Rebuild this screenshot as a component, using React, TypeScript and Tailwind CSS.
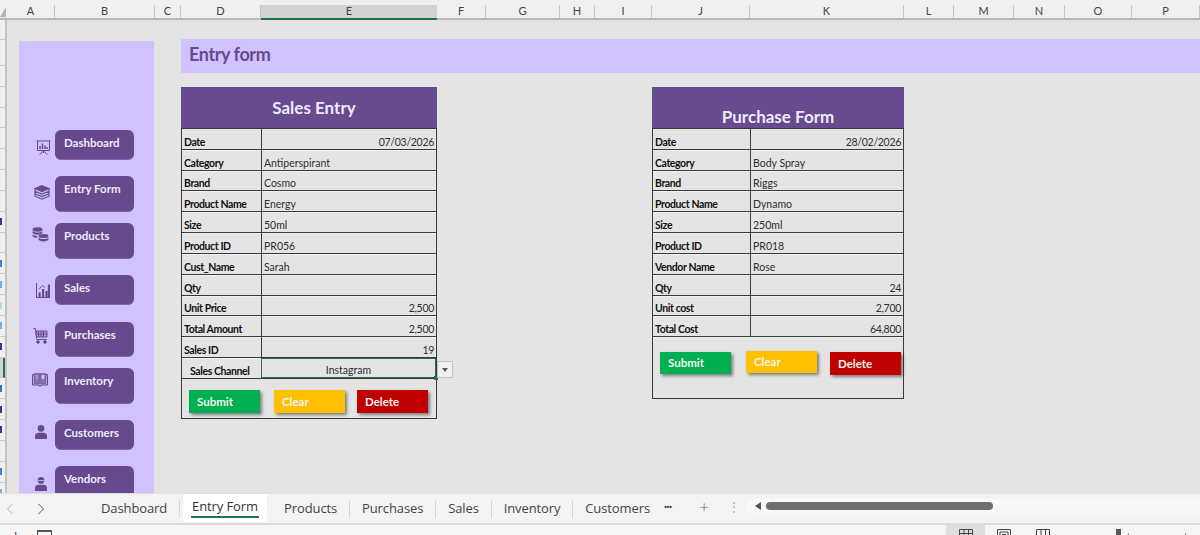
import type { ReactNode } from "react";

const columns = [
  { label: "A", width: "w-[48px]" },
  { label: "B", width: "w-[100px]" },
  { label: "C", width: "w-[26px]" },
  { label: "D", width: "w-[80px]" },
  { label: "E", width: "w-[176px]", active: true },
  { label: "F", width: "w-[49px]" },
  { label: "G", width: "w-[74px]" },
  { label: "H", width: "w-[35px]" },
  { label: "I", width: "w-[57px]" },
  { label: "J", width: "w-[98px]" },
  { label: "K", width: "w-[154px]" },
  { label: "L", width: "w-[50px]" },
  { label: "M", width: "w-[60px]" },
  { label: "N", width: "w-[51px]" },
  { label: "O", width: "w-[67px]" },
  { label: "P", width: "w-[68px]" },
];

// the row numbers are almost fully scrolled off, only a sliver of each shows
const rowMarks: Record<number, string> = {
  10: "bg-[#2a3f8f]",
  12: "bg-[#3b82d6]",
  13: "bg-[#6fb0ea]",
  14: "bg-[#b5dbe8]",
  15: "bg-[#6fb0ea]",
  16: "bg-[#2a3f8f]",
  18: "bg-[#3b6fc2]",
  19: "bg-[#2a3f8f]",
  20: "bg-[#2a3f8f]",
  22: "bg-[#3b82d6]",
  23: "bg-[#6fb0ea]",
};

const rowNumbers = Array.from({ length: 23 }, (_, i) => i + 1);

function DashboardIcon() {
  return (
    <svg viewBox="0 0 15 15" className="w-[15px] h-[15px]" fill="none" stroke="#674a8e">
      <path d="M0.5 1h14M1.5 1v9.5h12V1" />
      <path d="M4 9V6M6.5 9V3.5M9 9V5.5M11 9V7" strokeWidth="1.4" />
      <path d="M7.5 10.5v2.5M7.5 11l-4 3.5M7.5 11l4 3.5" />
    </svg>
  );
}

function LayersIcon() {
  return (
    <svg viewBox="0 0 16 15" className="w-[16px] h-[15px]" fill="none" stroke="#674a8e" strokeWidth="1.2">
      <path d="M8 0.7L15 3.6 8 6.5 1 3.6z" fill="#674a8e" />
      <path d="M1 6.2L8 9.1l7-2.9M1 8.7l7 2.9 7-2.9M1 3.6v7.6L8 14.2l7-3V3.6" />
    </svg>
  );
}

function CoinsIcon() {
  return (
    <svg viewBox="0 0 17 15" className="w-[17px] h-[15px]" fill="#674a8e">
      <ellipse cx="5.5" cy="2.5" rx="5" ry="2.2" />
      <path d="M0.5 4v1.5c0 1.2 2.2 2.2 5 2.2s5-1 5-2.2V4c-1 1-3 1.5-5 1.5S1.5 5 .5 4z" />
      <path d="M0.5 7.2v1.5c0 1.2 2.2 2.1 4.5 2.1V8.9c-2 0-3.7-.6-4.5-1.7z" />
      <ellipse cx="11.5" cy="9" rx="5" ry="2" />
      <path d="M6.5 10.5v1.7c0 1.2 2.2 2.2 5 2.2s5-1 5-2.2v-1.7c-1 1-3 1.5-5 1.5s-4-.5-5-1.500z" />
    </svg>
  );
}

function BarsIcon() {
  return (
    <svg viewBox="0 0 14 15" className="w-[14px] h-[15px]" fill="#674a8e">
      <path d="M0 0h1v14h13v1H0z" />
      <path d="M2.5 9.5h2.2V14H2.5zM6 6h2.2v8H6zM9.5 8h2v6h-2zM11.800 1.5H14V14h-2.200z" />
      <path d="M2.8 6.5L6.5 2.500l2.500 2" fill="none" stroke="#674a8e" />
    </svg>
  );
}

function CartIcon() {
  return (
    <svg viewBox="0 0 15 16" className="w-[15px] h-[16px]" fill="none" stroke="#674a8e">
      <path d="M0.3 0.5h2l1.5 11h10" />
      <path d="M3 3h11v6H3.5z" fill="#674a8e" fillOpacity="0.35" />
      <path d="M5.5 3v6M8 3v6M10.500 3v6M3 6h11" />
      <circle cx="5" cy="14" r="1.3" fill="#674a8e" />
      <circle cx="12" cy="14" r="1.3" fill="#674a8e" />
    </svg>
  );
}

function BookIcon() {
  return (
    <svg viewBox="0 0 16 14" className="w-[16px] h-[14px]">
      <path d="M0.5 1.5h15V12H9l-1 1.500-1-1.500H0.500z" fill="#b4a0d8" stroke="#674a8e" />
      <path d="M2.5 .5h5v10h-5zM8.500 .5h5v10h-5z" fill="#8a72b3" stroke="#674a8e" strokeWidth="0.6" />
      <path d="M4 3h2M4 5h2M10 2.500h2v3h-2z" stroke="#d1c2ff" strokeWidth="0.8" fill="#d1c2ff" />
    </svg>
  );
}

function PersonIcon({ headset }: { headset?: boolean }) {
  return (
    <svg viewBox="0 0 12 14" className="w-[12px] h-[14px]" fill="#674a8e">
      <circle cx="6" cy="3.4" r="3.3" />
      {headset && <path d="M3 3.600h6" stroke="#d1c2ff" strokeWidth="0.8" />}
      <path d="M0 14v-3c0-2 1.800-3.200 3.500-3.200h5c1.700 0 3.500 1.200 3.500 3.200v3z" />
    </svg>
  );
}

function SideItem({
  label,
  icon,
  rowClass,
  iconClass,
}: {
  label: string;
  icon: ReactNode;
  rowClass: string;
  iconClass: string;
}) {
  return (
    <div className={`flex shrink-0 ${rowClass}`}>
      <div className="w-[36px] shrink-0">
        <div className={iconClass}>{icon}</div>
      </div>
      <div className="w-[79px] h-full rounded-[6px] bg-[#674a8e] pl-[9px] pt-[5px] text-[11.5px] leading-[16px] font-bold text-[#efe9fb] border-b border-[#7d64a3]">
        {label}
      </div>
    </div>
  );
}

function Cell({
  label,
  value,
  right,
}: {
  label: string;
  value?: string;
  right?: boolean;
}) {
  return (
    <div className="flex h-[20.83px] border-b border-[#3a3a3a] shadow-[0_1px_0_rgba(255,255,255,0.5)]">
      <div className="w-[79px] shrink-0 flex items-end pl-[2px] text-[10.5px] tracking-[-0.4px] leading-[14px] font-bold text-[#111]">
        {label}
      </div>
      <div
        className={`flex-1 flex items-end border-l border-[#3a3a3a] px-[2px] text-[10.5px] leading-[14px] text-[#2e2e2e] ${
          right ? "justify-end tracking-[-0.3px]" : ""
        }`}
      >
        {value}
      </div>
    </div>
  );
}

function FormButton({ label, className }: { label: string; className: string }) {
  return (
    <div
      className={`w-[71px] flex items-center pl-[8px] text-[11.5px] font-bold text-[#f4f4f4] shadow-[2px_2px_3px_rgba(0,0,0,0.45)] ${className}`}
    >
      {label}
    </div>
  );
}

function Tab({ label }: { label: string }) {
  return (
    <div className="flex items-center">
      <span>{label}</span>
    </div>
  );
}

const salesRows = [
  { label: "Date", value: "07/03/2026", right: true },
  { label: "Category", value: "Antiperspirant" },
  { label: "Brand", value: "Cosmo" },
  { label: "Product Name", value: "Energy" },
  { label: "Size", value: "50ml" },
  { label: "Product ID", value: "PR056" },
  { label: "Cust_Name", value: "Sarah" },
  { label: "Qty", value: "" },
  { label: "Unit Price", value: "2,500", right: true },
  { label: "Total Amount", value: "2,500", right: true },
  { label: "Sales ID", value: "19", right: true },
];

const purchaseRows = [
  { label: "Date", value: "28/02/2026", right: true },
  { label: "Category", value: "Body Spray" },
  { label: "Brand", value: "Riggs" },
  { label: "Product Name", value: "Dynamo" },
  { label: "Size", value: "250ml" },
  { label: "Product ID", value: "PR018" },
  { label: "Vendor Name", value: "Rose" },
  { label: "Qty", value: "24", right: true },
  { label: "Unit cost", value: "2,700", right: true },
  { label: "Total Cost", value: "64,800", right: true },
];

function ViewIcon({ d, className }: { d: string; className: string }) {
  return (
    <svg viewBox="0 0 14 14" className={`w-[14px] h-[14px] shrink-0 ${className}`} fill="none" stroke="#444">
      <path d={d} />
    </svg>
  );
}

export default function App() {
  return (
    <div className="w-[1200px] h-[535px] overflow-hidden flex flex-col bg-[#e4e4e4] font-['Lato','Liberation_Sans',sans-serif]">
      {/* column headers */}
      <div className="flex h-[20px] shrink-0 bg-[#f0f0f0] border-b-2 border-[#b9b9b9]">
        <div className="w-[7px] shrink-0 pt-[7px] overflow-hidden">
          <div className="w-0 h-0 border-l-[6px] border-l-transparent border-b-[10px] border-b-[#b5b5b5]" />
        </div>
        {columns.map((c) =>
          c.active ? (
            <div
              key={c.label}
              className={`${c.width} shrink-0 mt-[5px] h-[15px] bg-[#d2d2d2] border-b-2 border-[#217346] flex items-center justify-center text-[11px] text-[#444]`}
            >
              {c.label}
            </div>
          ) : (
            <div
              key={c.label}
              className={`${c.width} shrink-0 mt-[5px] h-[13px] border-r border-[#c4c4c4] flex items-center justify-center text-[11px] text-[#444]`}
            >
              {c.label}
            </div>
          )
        )}
      </div>

      {/* sheet */}
      <div className="flex h-[473px] shrink-0 overflow-hidden">
        <div className="w-[7px] shrink-0 bg-[#f0f0f0] border-r-2 border-[#c4c4c4] flex flex-col overflow-hidden">
          {rowNumbers.map((n) => (
            <div
              key={n}
              className={`shrink-0 border-b border-[#c8c8c8] flex items-center ${
                n === 1 ? "h-[20px]" : n === 2 ? "h-[26px]" : "h-[20.83px]"
              } ${n === 17 ? "bg-[#d2d2d2] border-r-2 border-r-[#217346]" : ""}`}
            >
              {rowMarks[n] && <div className={`w-[1.5px] h-[7px] ${rowMarks[n]}`} />}
            </div>
          ))}
        </div>

        {/* side menu */}
        <div className="w-[135px] h-[452px] ml-[12px] mt-[21px] shrink-0 bg-[#d1c2ff] pt-[89px] flex flex-col overflow-hidden">
          <SideItem label="Dashboard" icon={<DashboardIcon />} rowClass="h-[30px]" iconClass="ml-[17px] mt-[10px]" />
          <SideItem label="Entry Form" icon={<LayersIcon />} rowClass="h-[36px] mt-[16px]" iconClass="ml-[15px] mt-[9px]" />
          <SideItem label="Products" icon={<CoinsIcon />} rowClass="h-[36px] mt-[11px]" iconClass="ml-[13px] mt-[4px]" />
          <SideItem label="Sales" icon={<BarsIcon />} rowClass="h-[30px] mt-[16px]" iconClass="ml-[17px] mt-[8px]" />
          <SideItem label="Purchases" icon={<CartIcon />} rowClass="h-[35px] mt-[17px]" iconClass="ml-[14px] mt-[6px]" />
          <SideItem label="Inventory" icon={<BookIcon />} rowClass="h-[36px] mt-[11px]" iconClass="ml-[13px] mt-[5px]" />
          <SideItem label="Customers" icon={<PersonIcon />} rowClass="h-[30px] mt-[16px]" iconClass="ml-[16px] mt-[5px]" />
          <SideItem label="Vendors" icon={<PersonIcon headset />} rowClass="h-[36px] mt-[16px]" iconClass="ml-[16px] mt-[11px]" />
        </div>

        {/* forms */}
        <div className="ml-[27px] flex-1 min-w-0 flex flex-col">
          <div className="mt-[19px] h-[34px] bg-[#d1c2ff] pl-[8px] pb-[3px] flex items-center text-[18px] tracking-[-0.4px] font-bold text-[#674a8e]">
            Entry form
          </div>

          <div className="flex mt-[14px]">
            {/* sales */}
            <div className="w-[256px] shrink-0">
              <div className="h-[41px] bg-[#684a8f] pl-[10px] flex items-center justify-center text-[17px] font-bold text-[#efe9fb]">
                Sales Entry
              </div>
              <div className="border-x border-t border-[#3a3a3a]">
                {salesRows.map((r) => (
                  <Cell key={r.label} label={r.label} value={r.value} right={r.right} />
                ))}
                <div className="relative flex h-[20.83px] border-b border-[#3a3a3a]">
                  <div className="w-[79px] shrink-0 flex items-end pl-[8px] text-[10.5px] tracking-[-0.4px] leading-[14px] font-bold text-[#111]">
                    Sales Channel
                  </div>
                  <div className="flex-1 flex items-end justify-center text-[10.5px] leading-[14px] text-[#2e2e2e] border border-[#217346]">
                    Instagram
                  </div>
                  <div className="absolute -right-[2px] -bottom-[2px] w-[4px] h-[4px] bg-[#217346]" />
                  <div className="absolute -right-[17px] top-[3px] w-[16px] h-[17px] bg-[#f0f0f0] border border-[#c4c4c4] flex items-center justify-center">
                    <div className="w-0 h-0 border-x-[3px] border-x-transparent border-t-[4px] border-t-[#555]" />
                  </div>
                </div>
                <div className="h-[40px] flex items-start pl-[7px] pt-[11px] border-b border-[#3a3a3a]">
                  <FormButton label="Submit" className="h-[23px] bg-[#00b050]" />
                  <FormButton label="Clear" className="h-[23px] ml-[14px] bg-[#ffc000]" />
                  <FormButton label="Delete" className="h-[23px] ml-[12px] bg-[#c00000]" />
                </div>
              </div>
            </div>

            {/* purchase */}
            <div className="w-[252px] shrink-0 ml-[215px]">
              <div className="h-[41px] bg-[#684a8f] flex items-end justify-center text-[17px] leading-[22px] font-bold text-[#efe9fb]">
                Purchase Form
              </div>
              <div className="border-x border-t border-[#3a3a3a]">
                {purchaseRows.map((r) => (
                  <div key={r.label} className="[&>div>div:first-child]:w-[97px]">
                    <Cell label={r.label} value={r.value} right={r.right} />
                  </div>
                ))}
                <div className="h-[62px] flex items-start pl-[7px] pt-[14px] border-b border-[#3a3a3a]">
                  <FormButton label="Submit" className="h-[22px] mt-[1px] pb-[2px] bg-[#00b050]" />
                  <FormButton label="Clear" className="h-[22px] ml-[15px] pb-[2px] bg-[#ffc000]" />
                  <FormButton label="Delete" className="h-[23px] mt-[1px] ml-[13px] bg-[#c00000]" />
                </div>
              </div>
            </div>
          </div>
        </div>
      </div>

      {/* sheet tabs */}
      <div className="flex h-[32px] shrink-0 bg-[#f3f3f3] border-t border-[#e0e0e0] border-b-2 border-b-[#dcdcdc] text-[13px] tracking-[-0.1px] text-[#444] font-['Open_Sans','Liberation_Sans',sans-serif]">
        <div className="w-[101px] shrink-0 flex items-center pl-[6px] gap-[23px]">
          <svg viewBox="0 0 8 12" className="w-[8px] h-[12px]" fill="none" stroke="#b5b5b5">
            <path d="M6.5 1L1.5 6l5 5" />
          </svg>
          <svg viewBox="0 0 8 12" className="w-[8px] h-[12px]" fill="none" stroke="#555">
            <path d="M1.5 1l5 5-5 5" />
          </svg>
        </div>
        <div className="w-[78px] flex items-center shrink-0">Dashboard</div>
        <div className="w-px h-[18px] self-center bg-[#d5d5d5]" />
        <div className="ml-[3px] w-[84px] h-[28px] bg-white rounded-b-[4px] flex flex-col items-center pt-[2px] text-[#333]">
          <span className="leading-[20px]">Entry Form</span>
          <div className="w-[68px] h-[2px] bg-[#217346]" />
        </div>
        <div className="ml-[17px] w-[366px] shrink-0 flex items-center gap-[12px]">
          <Tab label="Products" />
          <div className="w-px h-[18px] bg-[#d5d5d5]" />
          <Tab label="Purchases" />
          <div className="w-px h-[18px] bg-[#d5d5d5]" />
          <Tab label="Sales" />
          <div className="w-px h-[18px] bg-[#d5d5d5]" />
          <Tab label="Inventory" />
          <div className="w-px h-[18px] bg-[#d5d5d5]" />
          <Tab label="Customers" />
        </div>
        <div className="w-[36px] flex items-center justify-center text-[#333] text-[7px] font-bold leading-none pb-[3px]">•••</div>
        <div className="w-[36px] flex items-center justify-center text-[17px] font-light text-[#666] pb-[4px]">+</div>
        <div className="w-[24px] flex items-center justify-center text-[#aaa] text-[12px] pb-[4px]">⋮</div>
        <div className="flex-1 mt-[5px] h-[14px] bg-[#f8f8f8] rounded-l-[7px] flex items-center pl-[9px]">
          <div className="w-0 h-0 border-y-[4px] border-y-transparent border-r-[6px] border-r-[#555]" />
          <div className="ml-[5px] w-[227px] h-[8px] rounded-full bg-[#6f6f6f]" />
        </div>
      </div>

      {/* status bar */}
      <div className="flex h-[10px] shrink-0 bg-[#f5f5f5] overflow-hidden">
        <div className="w-[37px] shrink-0 pt-[5px] text-[11px] leading-[14px] text-[#444] overflow-hidden whitespace-nowrap -indent-[7px]">
          Ready:
        </div>
        <div className="mt-[5px] w-[15px] h-[12px] shrink-0 border border-[#555] border-t-2" />
        <div className="ml-[894px] w-[39px] shrink-0 bg-[#dedede] flex justify-center pt-[4px]">
          <ViewIcon d="M.5 .5h13v13H.5zM.5 4.5h13M5 .5v13M9.5 .5v13" className="" />
        </div>
        <ViewIcon d="M.5 .5h13v13H.5zM3 3h8v8H3zM5 5.5h4" className="ml-[12px] mt-[4px]" />
        <ViewIcon d="M.5 .5h13v13H.5zM5 .5v13M9.5 .5v13" className="ml-[25px] mt-[4px]" />
        <div className="ml-[66px] mt-[4px] w-[5px] h-[10px] shrink-0 bg-[#555]" />
        <div className="ml-[7px] mt-[8px] w-px h-[4px] shrink-0 bg-[#999]" />
        <div className="ml-[56px] mt-[8px] w-px h-[4px] shrink-0 bg-[#999]" />
      </div>
    </div>
  );
}
